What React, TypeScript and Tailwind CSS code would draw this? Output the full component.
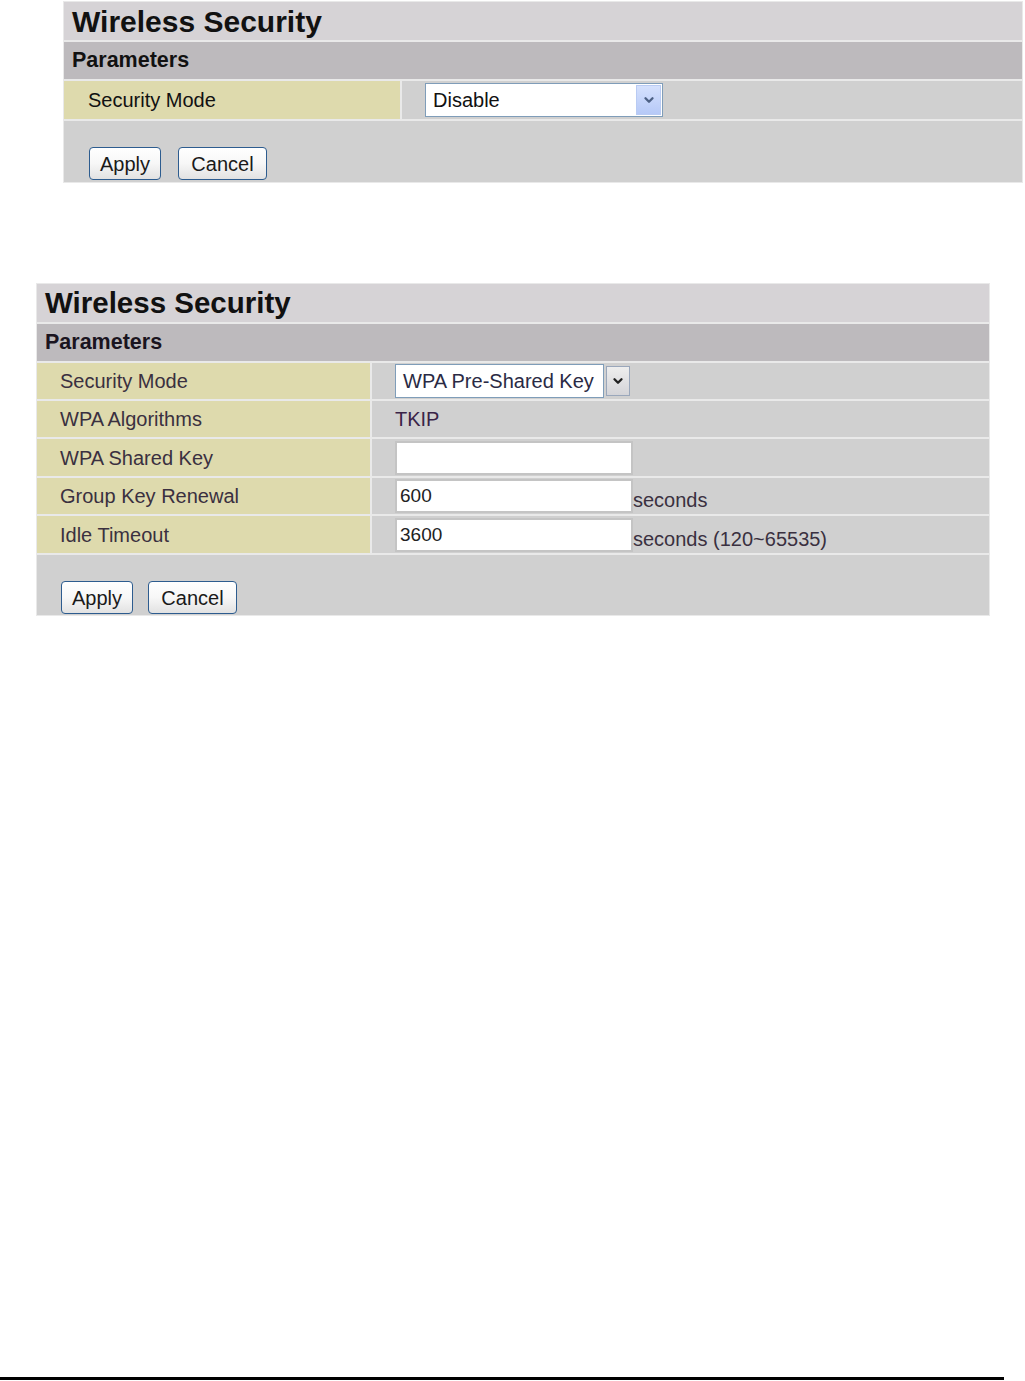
import React from 'react';
import { ChevronDown } from 'lucide-react';

const Button = ({ label, width }: { label: string; width: string }) => (
    <div
        className={`${width} h-[33px] flex items-center justify-center rounded-[4px] border border-[#2d5c8f] bg-gradient-to-b from-white via-[#f7f7f7] to-[#e2e2e2] text-[20px] text-[#1a1a1a] leading-none`}
    >
        {label}
    </div>
);

const DisableSelect = () => (
    <div className="w-[238px] h-[34px] flex items-center justify-between border border-[#7f9db9] bg-white pl-[7px] pr-[1px]">
        <span className="text-[20px] text-[#111] leading-none">Disable</span>
        <div className="w-[25px] h-[30px] flex items-center justify-center border border-[#b9cbf3] bg-gradient-to-b from-[#d5e1fd] to-[#b6c9f7]">
            <ChevronDown className="w-[14px] h-[14px] text-[#4d6185]" strokeWidth={4} />
        </div>
    </div>
);

const WpaSelect = () => (
    <div className="flex items-center h-[34px] gap-[2px]">
        <div className="w-[209px] h-[34px] flex items-center border border-[#7f9db9] bg-white pl-[7px]">
            <span className="text-[20px] text-[#2a2a44] leading-none whitespace-nowrap">WPA Pre-Shared Key</span>
        </div>
        <div className="w-[24px] h-[30px] flex items-center justify-center border border-[#9aa7bb] bg-gradient-to-b from-[#eeeeee] to-[#d4d4d8]">
            <ChevronDown className="w-[14px] h-[14px] text-[#222]" strokeWidth={4} />
        </div>
    </div>
);

const TextBox = ({ value }: { value: string }) => (
    <input
        readOnly
        value={value}
        className="w-[238px] h-[34px] border-2 border-[#c4c4c4] bg-white px-[3px] text-[19px] text-[#222] outline-none"
    />
);

const FirstPanel = () => (
    <div className="ml-[63px] mt-[1px] w-[960px] flex flex-col gap-[2px] bg-[#e9e9e9] p-[1px]">
        <div className="h-[38px] bg-[#d6d3d6] flex items-center pl-[8px] text-[30px] font-bold text-[#111]">
            Wireless Security
        </div>
        <div className="h-[37px] bg-[#bdbabd] flex items-center pl-[8px] text-[21.5px] font-bold text-[#111]">
            Parameters
        </div>
        <div className="h-[38px] grid grid-cols-[336px_1fr] gap-x-[2px]">
            <div className="bg-[#dedaad] flex items-center pl-[24px] text-[20px] text-[#111]">Security Mode</div>
            <div className="bg-[#d0d0d0] flex items-center pl-[23px]">
                <DisableSelect />
            </div>
        </div>
        <div className="h-[61px] bg-[#d0d0d0] flex items-end gap-[17px] pl-[25px] pb-[2px]">
            <Button label="Apply" width="w-[72px]" />
            <Button label="Cancel" width="w-[89px]" />
        </div>
    </div>
);

const rowLabel = 'bg-[#dedaad] flex items-center pl-[23px] text-[20px] text-[#3a3040]';

const SecondPanel = () => (
    <div className="ml-[36px] mt-[100px] w-[954px] flex flex-col gap-[2px] bg-[#e9e9e9] p-[1px]">
        <div className="h-[38px] bg-[#d6d3d6] flex items-center pl-[8px] text-[29.5px] font-bold text-[#111]">
            Wireless Security
        </div>
        <div className="h-[37px] bg-[#bdbabd] flex items-center pl-[8px] text-[21.5px] font-bold text-[#1a1420]">
            Parameters
        </div>
        <div className="h-[36px] grid grid-cols-[333px_1fr] gap-x-[2px]">
            <div className={rowLabel}>Security Mode</div>
            <div className="bg-[#d0d0d0] flex items-center pl-[23px]">
                <WpaSelect />
            </div>
        </div>
        <div className="h-[36px] grid grid-cols-[333px_1fr] gap-x-[2px]">
            <div className={rowLabel}>WPA Algorithms</div>
            <div className="bg-[#d0d0d0] flex items-center pl-[23px] text-[20px] text-[#3a2448]">TKIP</div>
        </div>
        <div className="h-[37px] grid grid-cols-[333px_1fr] gap-x-[2px]">
            <div className={rowLabel}>WPA Shared Key</div>
            <div className="bg-[#d0d0d0] flex items-center pl-[23px]">
                <TextBox value="" />
            </div>
        </div>
        <div className="h-[36px] grid grid-cols-[333px_1fr] gap-x-[2px]">
            <div className={rowLabel}>Group Key Renewal</div>
            <div className="bg-[#d0d0d0] flex items-center pl-[23px]">
                <TextBox value="600" />
                <span className="self-end mb-[3px] text-[20px] leading-[22px] text-[#3a3040]">seconds</span>
            </div>
        </div>
        <div className="h-[37px] grid grid-cols-[333px_1fr] gap-x-[2px]">
            <div className={rowLabel}>Idle Timeout</div>
            <div className="bg-[#d0d0d0] flex items-center pl-[23px]">
                <TextBox value="3600" />
                <span className="self-end mb-[3px] text-[20px] leading-[22px] text-[#3a3040]">seconds (120~65535)</span>
            </div>
        </div>
        <div className="h-[60px] bg-[#d0d0d0] flex items-end gap-[15px] pl-[24px] pb-[1px]">
            <Button label="Apply" width="w-[72px]" />
            <Button label="Cancel" width="w-[89px]" />
        </div>
    </div>
);

export default function App() {
    return (
        <div className="min-h-[1381px] bg-white flex flex-col font-['Liberation_Sans',Arial,sans-serif]">
            <FirstPanel />
            <SecondPanel />
            <div className="mt-auto mb-[1px] w-[1004px] h-[3px] bg-black" />
        </div>
    );
}
